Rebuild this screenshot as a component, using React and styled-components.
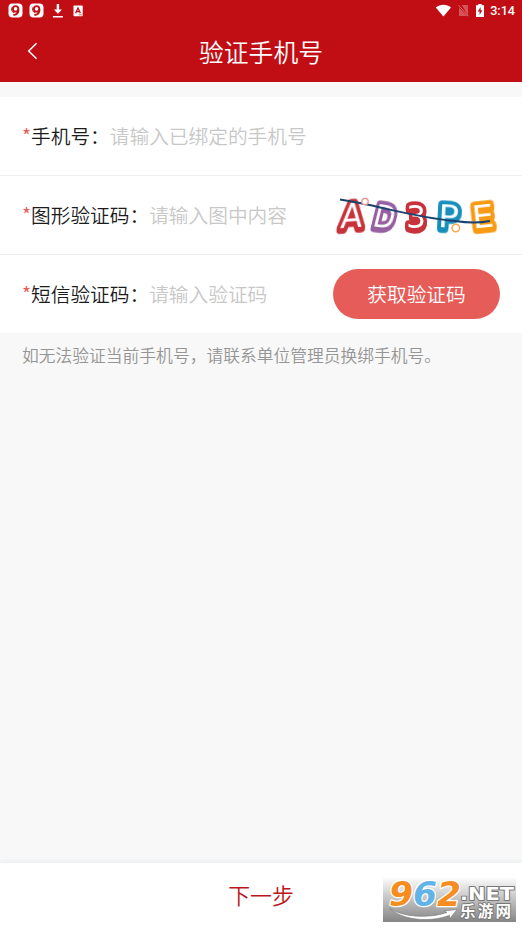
import React from "react";
import styled, { createGlobalStyle } from "styled-components";

const GlobalStyle = createGlobalStyle`
  * {
    box-sizing: border-box;
  }

  body {
    margin: 0;
    background-color: #f8f8f8;
    font-family: "Noto Sans CJK SC", sans-serif;
  }
`;

const Page = styled.div`
  display: flex;
  flex-direction: column;
  width: 100%;
  height: 928px;
  background-color: #f8f8f8;
  overflow: hidden;
`;

const Header = styled.header`
  height: 82px;
  flex-shrink: 0;
  background-color: #c10e15;
  color: #ffffff;
`;

const StatusBar = styled.div`
  display: flex;
  align-items: center;
  justify-content: space-between;
  height: 21px;
  padding: 0 7px 0 8px;
`;

const StatusGroup = styled.div`
  display: flex;
  align-items: center;
  gap: ${(props) => props.$gap};
`;

const Clock = styled.span`
  margin-left: -1px;
  font-family: Roboto, sans-serif;
  font-size: 12.6px;
  font-weight: 500;
  line-height: 21px;
`;

const NavBar = styled.div`
  display: grid;
  grid-template-columns: 66px 1fr 66px;
  align-items: center;
  height: 60px;
`;

const BackButton = styled.button`
  display: flex;
  align-items: center;
  height: 40px;
  padding: 0 0 0 26px;
  border: none;
  background: none;
  color: inherit;
`;

const Title = styled.h1`
  margin: 0;
  font-size: 24.8px;
  font-weight: 350;
  line-height: 59px;
  text-align: center;
`;

const Form = styled.form`
  margin-top: 15px;
  background-color: #ffffff;
`;

const Row = styled.div`
  display: flex;
  align-items: center;
  height: 79px;
  padding: 0 22px;
  border-bottom: 1px solid #eeeeee;

  &:last-child {
    height: 78px;
    border-bottom: none;
  }
`;

const Label = styled.label`
  flex-shrink: 0;
  font-size: 19.7px;
  font-weight: 350;
  line-height: 30px;
  color: #1c1c1c;
  white-space: nowrap;
`;

const Required = styled.span`
  color: #e45b58;
`;

const Input = styled.input`
  flex: 1;
  min-width: 0;
  height: 30px;
  padding: 0 0 2px;
  border: none;
  outline: none;
  background: none;
  font-family: inherit;
  font-size: 19.7px;
  font-weight: 350;
  color: #222222;

  &::placeholder {
    color: #c8c8c8;
    opacity: 1;
  }
`;

const CodeButton = styled.button`
  flex-shrink: 0;
  width: 167px;
  height: 50px;
  padding: 0;
  border: none;
  border-radius: 25px;
  background-color: #e55c58;
  color: #ffffff;
  font-family: inherit;
  font-size: 19.7px;
  font-weight: 350;
  line-height: 50px;
`;

const Captcha = styled.svg`
  flex-shrink: 0;
  width: 167px;
  height: 50px;
  font-family: "DejaVu Sans", sans-serif;
`;

const Hint = styled.p`
  flex: 1;
  margin: 0;
  padding: 9px 22px;
  font-size: 16.78px;
  font-weight: 350;
  line-height: 26px;
  color: #959595;
  white-space: nowrap;
`;

const Footer = styled.footer`
  position: relative;
  height: 65px;
  flex-shrink: 0;
  background-color: #ffffff;
  box-shadow: 0 -1px 4px #e9ebf5;
`;

const NextButton = styled.button`
  width: 100%;
  height: 65px;
  padding: 0 0 1px;
  border: none;
  background: none;
  color: #b9151b;
  font-family: inherit;
  font-size: 21.9px;
  font-weight: 350;
  line-height: 64px;
`;

const Watermark = styled.svg`
  position: absolute;
  right: 6px;
  bottom: 6px;
  width: 133px;
  height: 44px;
  overflow: visible;
`;

const NineIcon = () => (
  <svg width="15" height="15" viewBox="0 0 15 15">
    <rect x="0.5" y="0.5" width="14" height="14" rx="4" fill="#fff" />
    <circle cx="7.6" cy="5.9" r="2.7" fill="none" stroke="#c10e15" strokeWidth="1.8" />
    <path d="M10.4 5.8c.3 3.5-1.6 5.8-5 6.2" fill="none" stroke="#c10e15" strokeWidth="1.9" />
    <path d="M4.1 4.1c-1.1 2.5-.4 4.8 1.8 5.6" fill="none" stroke="#c10e15" strokeWidth="1" />
  </svg>
);

const DownloadIcon = () => (
  <svg width="17" height="14" viewBox="-2.5 0 17 14">
    <path d="M4.2 0h2.4v5.4h2.9L5.4 9.8 1.4 5.4h2.8zM0.4 12h10v1.5h-10z" fill="#fff" />
  </svg>
);

const LetterIcon = () => (
  <svg width="10" height="12" viewBox="0 0 10 12">
    <rect x="0.5" y="0.5" width="9.2" height="10.7" rx="0.7" fill="#fff" />
    <path d="M2.6 8.2 5 3l2.4 5.2M3.4 6.6h3.2" fill="none" stroke="#c10e15" strokeWidth="1.3" />
    <path d="M5.5 9.8H9" stroke="#c10e15" strokeWidth="0.6" />
  </svg>
);

const WifiIcon = () => (
  <svg width="16" height="13" viewBox="0 0 16 13">
    <path d="M0.8 3.6C5.3-0.2 11.7-0.2 16 3.6L8.4 12.4z" fill="#fff" />
  </svg>
);

const NoSimIcon = () => (
  <svg width="11" height="13" viewBox="0 0 11 13">
    <path d="M3.8 1H10v10.8zM1 3.4 9.3 12H1z" fill="#e17a7e" opacity="0.65" />
    <path d="M0.5 1.2 10.5 12.3" stroke="#df7b7e" strokeWidth="0.9" />
  </svg>
);

const BatteryIcon = () => (
  <svg width="8" height="13" viewBox="0 0 8 13">
    <path d="M2.3 0h3.4v1.2H8V13H0V1.2h2.3z" fill="#fff" />
    <path d="M4.6 2.9 1.8 7.4h1.8v3.5l2.8-4.6H4.6z" fill="#c10e15" />
  </svg>
);

const BackIcon = () => (
  <svg width="12" height="18" viewBox="0 0 12 18">
    <path d="M10.6 1.2 2.7 9l7.9 7.8" fill="none" stroke="#fff" strokeWidth="1.5" />
  </svg>
);

// x and y are the middle of each letter's baseline
const captchaLetters = [
  { char: "A", x: 18, y: 37.5, color: "#c8323a", rotate: -4, scale: 0.98, skew: -8 },
  { char: "D", x: 49, y: 37.5, color: "#965fa0", rotate: 8, scale: 0.84, skew: -6 },
  { char: "3", x: 83, y: 37.5, color: "#c8323a", rotate: 0, scale: 0.95, skew: 0 },
  { char: "P", x: 115, y: 37.5, color: "#168fba", rotate: 3, scale: 1.05, skew: 0 },
  { char: "E", x: 151, y: 37.5, color: "#f99a15", rotate: -6, scale: 1.05, skew: 0 },
];

const CaptchaImage = () => (
  <Captcha viewBox="0 0 167 50">
    {captchaLetters.map(({ char, x, y, color, rotate, scale, skew }) => (
      <text
        key={char}
        transform={`translate(${x} ${y}) rotate(${rotate}) skewX(${skew}) scale(${scale} 1)`}
        textAnchor="middle"
        fontSize="32.5"
        fill="#fff"
        stroke={color}
        strokeWidth="7.4"
        strokeLinejoin="round"
        paintOrder="stroke"
        style={{ filter: `drop-shadow(0 2.4px 0 ${color})` }}
      >
        {char}
      </text>
    ))}
    <path d="M7 9.5C45 15 78 27 122 31q20 3 35 0" fill="none" stroke="#1b426f" strokeWidth="1.9" />
    <circle cx="32" cy="11.5" r="3.2" fill="#fff" stroke="#ef8d89" strokeWidth="1.3" />
    <circle cx="122.8" cy="38" r="3.8" fill="#fff" stroke="#f7aa4c" strokeWidth="1.5" />
  </Captcha>
);

const SiteMark = () => (
  <Watermark viewBox="0 0 133 44">
    <defs>
      <linearGradient id="plate" x1="0" y1="0" x2="0" y2="1">
        <stop offset="0" stopColor="#fbfbfb" />
        <stop offset="1" stopColor="#858585" />
      </linearGradient>
    </defs>
    <rect width="133" height="44" fill="url(#plate)" />
    <path
      d="M6.5 30.5C20 39 45 41 64 34.5l-3-1.5 13-1.5-7 9-.5-3.2C46 45 20 42 6.5 30.5z"
      fill="#fff"
      stroke="#777"
      strokeWidth="0.6"
    />
    <text
      x="6"
      y="27.5"
      textLength="72"
      lengthAdjust="spacingAndGlyphs"
      fontFamily="DejaVu Sans, sans-serif"
      fontWeight="700"
      fontStyle="italic"
      fontSize="33"
      stroke="#fff"
      strokeWidth="2.4"
      paintOrder="stroke"
      strokeLinejoin="round"
    >
      <tspan fill="#f58d20">9</tspan>
      <tspan fill="#63b4e6">6</tspan>
      <tspan fill="#f58d20">2</tspan>
    </text>
    <g fill="#fff" stroke="#777" strokeWidth="1.8" paintOrder="stroke" strokeLinejoin="round" fontWeight="700">
      <text x="77" y="21.5" fontFamily="DejaVu Sans, sans-serif" fontSize="17" textLength="54" lengthAdjust="spacingAndGlyphs">
        .NET
      </text>
      <text x="77" y="39" fontFamily="Noto Sans CJK SC, sans-serif" fontSize="15.5" textLength="51">
        乐游网
      </text>
    </g>
  </Watermark>
);

const App = () => {
  return (
    <Page>
      <GlobalStyle />
      <Header>
        <StatusBar>
          <StatusGroup $gap="6px">
            <NineIcon />
            <NineIcon />
            <DownloadIcon />
            <LetterIcon />
          </StatusGroup>
          <StatusGroup $gap="7px">
            <WifiIcon />
            <NoSimIcon />
            <BatteryIcon />
            <Clock>3:14</Clock>
          </StatusGroup>
        </StatusBar>
        <NavBar>
          <BackButton type="button" aria-label="返回">
            <BackIcon />
          </BackButton>
          <Title>验证手机号</Title>
        </NavBar>
      </Header>

      <Form>
        <Row>
          <Label htmlFor="phone"><Required>*</Required>手机号：</Label>
          <Input id="phone" placeholder="请输入已绑定的手机号" />
        </Row>
        <Row>
          <Label htmlFor="captcha"><Required>*</Required>图形验证码：</Label>
          <Input id="captcha" placeholder="请输入图中内容" />
          <CaptchaImage />
        </Row>
        <Row>
          <Label htmlFor="sms"><Required>*</Required>短信验证码：</Label>
          <Input id="sms" placeholder="请输入验证码" />
          <CodeButton type="button">获取验证码</CodeButton>
        </Row>
      </Form>

      <Hint>如无法验证当前手机号，请联系单位管理员换绑手机号。</Hint>

      <Footer>
        <NextButton type="button">下一步</NextButton>
        <SiteMark />
      </Footer>
    </Page>
  );
};

export default App;
